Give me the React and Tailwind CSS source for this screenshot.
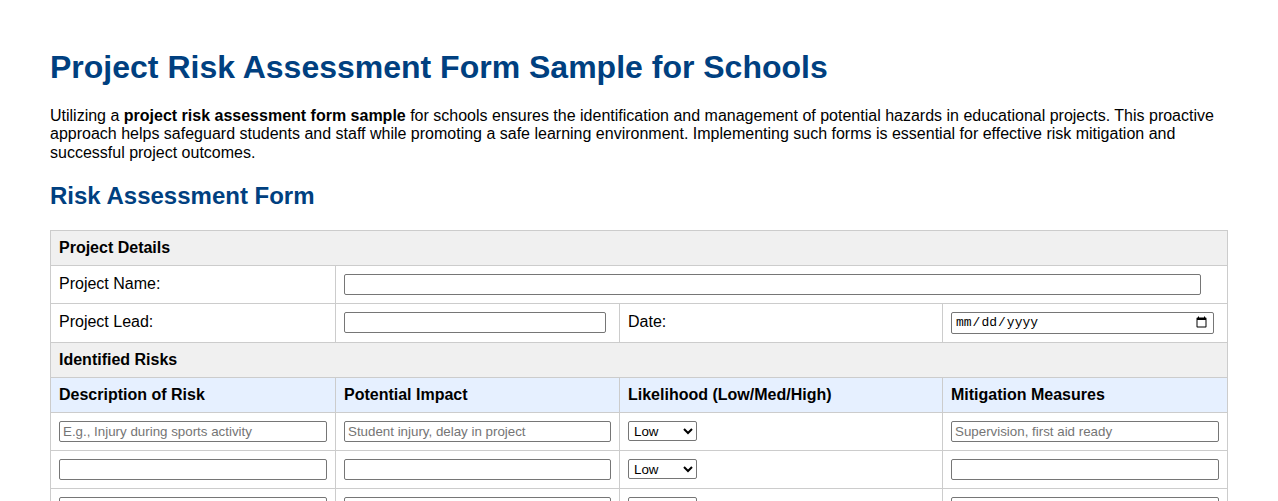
export default function App() {
  const cell = 'border border-[#cccccc] px-2 py-2 text-left align-middle';
  const head = 'border border-[#cccccc] px-2 py-2 text-left align-middle font-bold leading-[18px]';
  const input =
    'block h-[21px] border border-[#767676] rounded-[2px] bg-white px-[3px] text-[13.33px] text-black placeholder:text-[#757575] font-["Liberation_Sans",Arial,sans-serif]';

  const riskRows = [
    { desc: 'E.g., Injury during sports activity', impact: 'Student injury, delay in project', mitigation: 'Supervision, first aid ready' },
    { desc: '', impact: '', mitigation: '' },
    { desc: '', impact: '', mitigation: '' },
    { desc: '', impact: '', mitigation: '' },
  ];

  return (
    <div className="min-h-screen bg-white px-[50px] pt-[49px] pb-10 text-black font-['Liberation_Sans',Arial,sans-serif]">
      <h1 className="text-[32px] leading-[1.15] font-bold text-[#004080] mb-[21px]">
        Project Risk Assessment Form Sample for Schools
      </h1>
      <p className="text-base leading-[1.15] mb-[20px]">
        Utilizing a <strong>project risk assessment form sample</strong> for schools ensures the identification and
        management of potential hazards in educational projects. This proactive approach helps safeguard students and
        staff while promoting a safe learning environment. Implementing such forms is essential for effective risk
        mitigation and successful project outcomes.
      </p>
      <h2 className="text-[24px] leading-[1.15] font-bold text-[#004080] mb-[20px]">Risk Assessment Form</h2>

      <table className="w-[1177px] table-fixed border-collapse text-base leading-[1.15]">
        <colgroup>
          <col className="w-[285px]" />
          <col className="w-[284px]" />
          <col className="w-[323px]" />
          <col className="w-[285px]" />
        </colgroup>
        <tbody>
          {/* project details */}
          <tr className="bg-[#f0f0f0]">
            <th colSpan={4} className={head}>Project Details</th>
          </tr>
          <tr>
            <td className={cell}>Project Name:</td>
            <td colSpan={3} className={cell}>
              <input type="text" className={`${input} w-[857px]`} />
            </td>
          </tr>
          <tr>
            <td className={cell}>Project Lead:</td>
            <td className={cell}>
              <input type="text" className={`${input} w-[262px]`} />
            </td>
            <td className={cell}>Date:</td>
            <td className={cell}>
              <input
                type="date"
                className="block h-[22px] w-[263px] border border-[#767676] rounded-[2px] bg-white px-[3px] py-[2px] text-[13px] leading-[16px] text-black font-['Liberation_Mono',monospace]"
              />
            </td>
          </tr>

          {/* risks */}
          <tr className="bg-[#f0f0f0]">
            <th colSpan={4} className={head}>Identified Risks</th>
          </tr>
          <tr className="bg-[#e6f0ff]">
            <th className={head}>Description of Risk</th>
            <th className={head}>Potential Impact</th>
            <th className={head}>Likelihood (Low/Med/High)</th>
            <th className={head}>Mitigation Measures</th>
          </tr>
          {riskRows.map((r, i) => (
            <tr key={i}>
              <td className={cell}>
                <input type="text" placeholder={r.desc} className={`${input} w-full`} />
              </td>
              <td className={cell}>
                <input type="text" placeholder={r.impact} className={`${input} w-full`} />
              </td>
              <td className={cell}>
                <select className="block h-[20px] w-[69px] border border-[#767676] rounded-[2px] bg-white pl-[1px] text-[13.33px] font-['Liberation_Sans',Arial,sans-serif]">
                  <option>Low</option>
                  <option>Medium</option>
                  <option>High</option>
                </select>
              </td>
              <td className={cell}>
                <input type="text" placeholder={r.mitigation} className={`${input} w-full`} />
              </td>
            </tr>
          ))}
        </tbody>
      </table>
    </div>
  );
}
